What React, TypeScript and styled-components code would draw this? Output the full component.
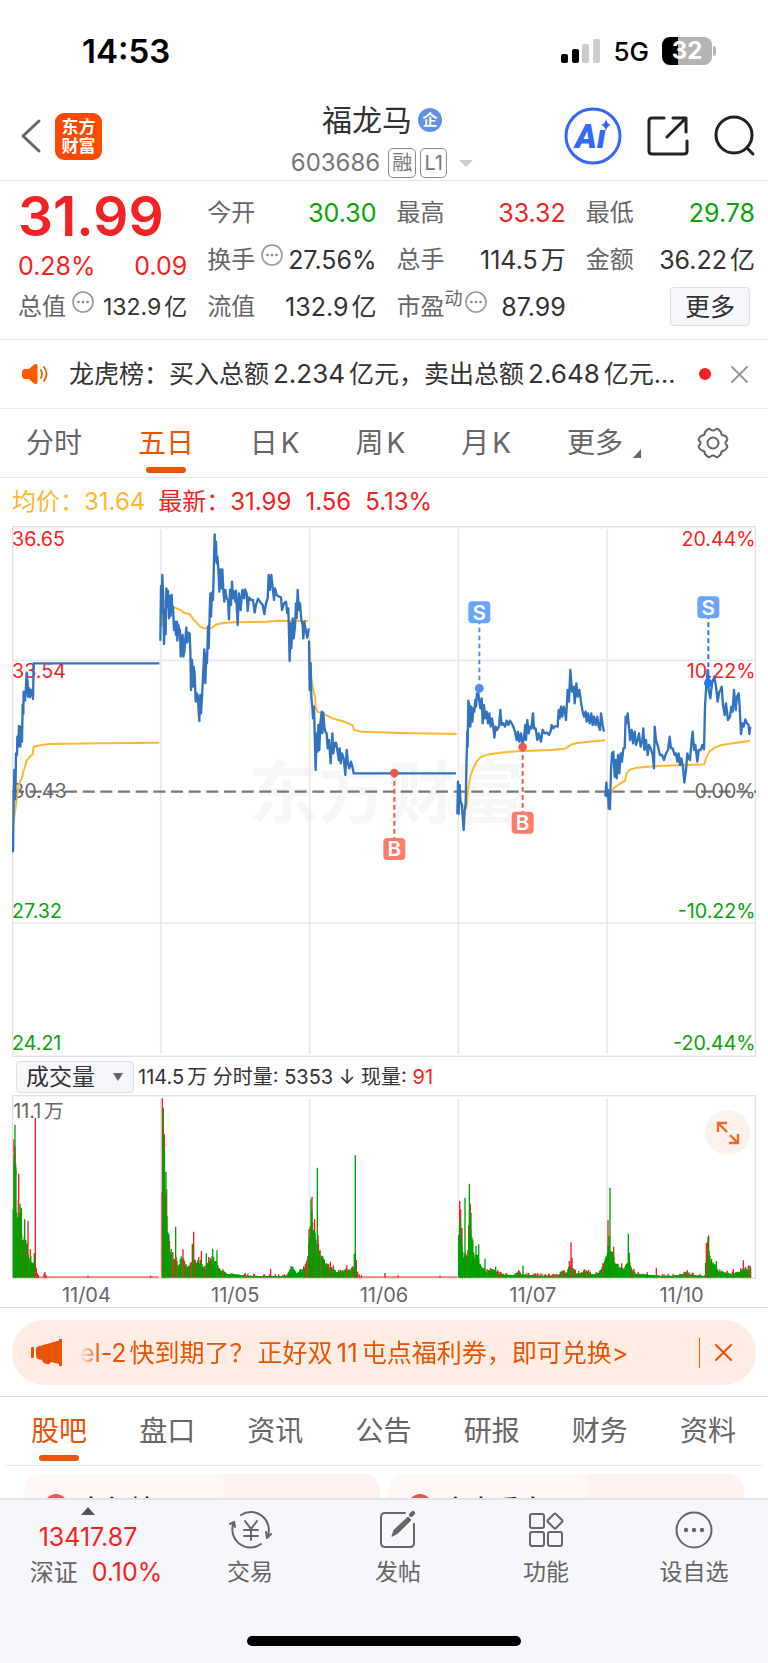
import React from 'react';
import styled, { createGlobalStyle, css } from 'styled-components';

const color = {
  red: '#f52222',
  green: '#0aa30a',
  orange: '#ea5504',
  text: '#333333',
  sub: '#666666',
  line: '#ececee',
  grid: '#e6e9f0',
  blue: '#3273c0',
  avg: '#ffb833',
  panel: '#f6f7fa',
};

const GlobalStyle = createGlobalStyle`
  *, *::before, *::after { box-sizing: border-box; }
  body {
    margin: 0;
    background: #fff;
    color: ${color.text};
    font-family: Inter, "Noto Sans CJK SC", sans-serif;
  }
  button, select { font: inherit; color: inherit; }
  button { padding: 0; border: 0; background: none; cursor: pointer; }
  a { color: inherit; text-decoration: none; }
  svg { display: block; }
`;

const Page = styled.div`
  display: flex;
  flex-direction: column;
  min-height: 100vh;
`;

/* ---------- status bar ---------- */

const StatusBar = styled.div`
  display: flex;
  align-items: center;
  justify-content: space-between;
  height: 102px;
  padding: 0 56px 0 82px;
  color: #000;
`;

const Clock = styled.time`
  font-size: 33px;
  font-weight: 600;
`;

const StatusIcons = styled.div`
  display: flex;
  align-items: center;
  gap: 13px;
  font-size: 26px;
  font-weight: 500;
`;

const Battery = styled.span`
  position: relative;
  width: 50px;
  height: 28px;
  border-radius: 8px;
  background: linear-gradient(to right, #000 32%, #b4b4b4 32%);
  color: #fff;
  font-size: 24px;
  font-weight: 700;
  line-height: 28px;
  text-align: center;

  &::after {
    content: '';
    position: absolute;
    left: 51px;
    top: 9px;
    width: 3px;
    height: 10px;
    border-radius: 0 3px 3px 0;
    background: #b4b4b4;
  }
`;

/* ---------- header ---------- */

const Header = styled.header`
  display: grid;
  grid-template-columns: 1fr auto 1fr;
  height: 79px;
  padding: 0 12px 0 8px;
  border-bottom: 1px solid #e4e4e6;
`;

const HeaderSide = styled.div<{ $end?: boolean }>`
  display: flex;
  align-items: center;
  gap: ${(p) => (p.$end ? 25 : 13)}px;
  justify-content: ${(p) => (p.$end ? 'flex-end' : 'flex-start')};
  height: 68px;
  padding-left: 12px;
`;

const Logo = styled.a`
  width: 47px;
  height: 47px;
  padding-top: 5px;
  border-radius: 9px;
  background: #ff4800;
  color: #fff;
  font-size: 17px;
  font-weight: 700;
  line-height: 19px;
  text-align: center;
`;

const Title = styled.div`
  display: flex;
  flex-direction: column;
  align-items: center;
  gap: 10px;
`;

const TitleLine = styled.h1`
  display: flex;
  align-items: center;
  gap: 6px;
  margin: 0;
  font-size: 30px;
  font-weight: 400;
  line-height: 36px;
`;

const CorpBadge = styled.span`
  width: 24px;
  height: 24px;
  border-radius: 50%;
  background: #6190e8;
  color: #fff;
  font-size: 15px;
  font-weight: 700;
  line-height: 23px;
  text-align: center;
`;

const CodeLine = styled.div`
  display: flex;
  align-items: center;
  gap: 4px;
  color: #777;
  font-size: 24px;
  line-height: 30px;
`;

const Tag = styled.span`
  min-width: 27px;
  height: 30px;
  padding: 0 3px;
  border: 1px solid #8a8a8a;
  border-radius: 5px;
  font-size: 20px;
  line-height: 28px;
  text-align: center;

  &:first-of-type { margin-left: 4px; }
`;

const Caret = styled.span`
  width: 0;
  margin-left: 8px;
  border: 7px solid transparent;
  border-top-color: #ccc;
  border-bottom: 0;
`;

/* ---------- quote ---------- */

const Quote = styled.section`
  display: grid;
  grid-template-columns: repeat(4, 1fr);
  column-gap: 20px;
  padding: 8px 13px 9px 18px;
  border-bottom: 1px solid ${color.line};
`;

const QuoteColumn = styled.dl`
  margin: 0;
`;

const Price = styled.div`
  height: 54px;
  color: ${color.red};
  font-size: 55px;
  font-weight: 600;
  line-height: 54px;
`;

const Change = styled.div`
  display: flex;
  justify-content: space-between;
  height: 40px;
  padding-top: 6px;
  color: ${color.red};
  font-size: 25px;
  line-height: 34px;
`;

type Tone = 'red' | 'green' | 'text';

const Cell = styled.div<{ $tone?: Tone; $small?: boolean }>`
  display: flex;
  align-items: center;
  justify-content: space-between;
  height: 47px;
  white-space: nowrap;

  dt {
    display: flex;
    align-items: center;
    color: ${color.sub};
    font-size: 24px;
    line-height: 32px;
  }
  dt svg { margin: 0 0 10px 6px; }
  dt sup { margin-bottom: 16px; font-size: 18px; line-height: 18px; }
  dt sup + svg { margin-left: 2px; }
  dd {
    margin: 0;
    color: ${(p) => color[p.$tone ?? 'text']};
    font-size: ${(p) => (p.$small ? 23 : 25)}px;
    line-height: 32px;
  }
`;

const Unit = styled.span`
  margin-left: 3px;
`;

const MoreCell = styled(Cell)`
  justify-content: flex-end;
  padding-right: 5px;
`;

const MoreButton = styled.button`
  width: 80px;
  height: 39px;
  border: 1px solid #dcdee3;
  border-radius: 4px;
  background: ${color.panel};
  font-size: 25px;
  line-height: 36px;
`;

/* ---------- news ---------- */

const News = styled.section`
  display: flex;
  align-items: center;
  height: 69px;
  padding: 0 20px 0 22px;
  border-bottom: 1px solid ${color.line};
`;

const NewsLink = styled.a`
  flex: 1;
  min-width: 0;
  margin: 0 16px 0 20px;
  overflow: hidden;
  font-size: 25px;
  line-height: 36px;
  text-overflow: ellipsis;
  white-space: nowrap;
`;

const Num = styled.span`
  margin: 0 4px;
  font-size: 26px;
`;

const UnreadDot = styled.span`
  width: 12px;
  height: 12px;
  margin-right: 20px;
  border-radius: 50%;
  background: ${color.red};
`;

const DismissButton = styled.button<{ $muted?: boolean }>`
  color: ${(p) => (p.$muted ? '#999' : color.orange)};
`;

/* ---------- tabs ---------- */

const Tabs = styled.nav<{ $kind: 'period' | 'section' }>`
  display: flex;
  align-items: center;
  justify-content: space-between;
  height: 69px;
  ${(p) =>
    p.$kind === 'period'
      ? css`
          padding: 0 39px 0 26px;
        `
      : css`
          margin: 0 6px;
          padding: 0 26px 0 25px;
        `}
  border-bottom: 1px solid #e8e8ea;
`;

const Tab = styled.button<{ $active?: boolean }>`
  position: relative;
  display: flex;
  align-items: center;
  gap: 3px;
  height: 68px;
  color: ${(p) => (p.$active ? color.orange : color.sub)};
  font-size: 28px;
  line-height: 68px;

  ${(p) =>
    p.$active &&
    css`
      &::after {
        content: '';
        position: absolute;
        left: 8px;
        right: 8px;
        bottom: 4px;
        height: 6px;
        border-radius: 3px;
        background: ${color.orange};
      }
    `}
`;

const Corner = styled.span`
  align-self: flex-end;
  margin: 0 0 19px 7px;
  border-left: 8px solid transparent;
  border-bottom: 9px solid #666;
`;

/* ---------- charts ---------- */

const Legend = styled.p`
  display: flex;
  align-items: center;
  height: 48px;
  margin: 0;
  padding: 0 12px;
  color: ${color.red};
  font-size: 24px;
  line-height: 32px;
  white-space: pre;
`;

const Avg = styled.span`
  margin-right: 13px;
  color: ${color.avg};
`;

const LegendValue = styled.span`
  margin-right: 14px;
`;

const Charts = styled.section`
  padding: 0 12px;
  border-bottom: 1px solid #dfe0e4;

  > svg { width: 100%; height: auto; }
`;

const VolumeBar = styled.div`
  display: flex;
  align-items: center;
  gap: 4px;
  height: 38px;
  padding: 2px 0 0 4px;
  font-size: 20px;
  line-height: 28px;
  white-space: pre;
`;

const SelectBox = styled.label`
  position: relative;

  select {
    width: 118px;
    height: 32px;
    padding: 0 0 0 9px;
    border: 1px solid #dcdee3;
    border-radius: 4px;
    background: ${color.panel};
    appearance: none;
    font-size: 23px;
    line-height: 28px;
  }
  &::after {
    content: '';
    position: absolute;
    right: 11px;
    top: 12px;
    border: 5px solid transparent;
    border-top: 8px solid #666;
    border-bottom: 0;
    pointer-events: none;
  }
`;

const Current = styled.span`
  color: ${color.red};
`;

const VolumeWrap = styled.div`
  position: relative;

  > svg { width: 100%; height: auto; }
`;

const ExpandButton = styled.button`
  position: absolute;
  top: 15px;
  right: 6px;
  display: grid;
  place-items: center;
  width: 45px;
  height: 45px;
  border-radius: 50%;
  background: #fdf1eb;
`;

const Dates = styled.div`
  display: grid;
  grid-template-columns: repeat(5, 1fr);
  height: 28px;
  color: ${color.sub};
  font-size: 20px;
  line-height: 32px;
  text-align: center;
`;

/* ---------- promo banner ---------- */

const PromoSection = styled.section`
  padding: 12px 12px 11px;
  border-bottom: 1px solid #dfe0e4;
`;

const Promo = styled.div`
  display: flex;
  align-items: center;
  height: 65px;
  padding: 0 24px 0 19px;
  border-radius: 32px;
  background: #ffede4;
  color: ${color.orange};
`;

const PromoText = styled.a`
  flex: 1;
  min-width: 0;
  margin-left: 17px;
  overflow: hidden;
  font-size: 25px;
  line-height: 36px;
  white-space: nowrap;
  mask-image: linear-gradient(to right, transparent, #000 20px);
`;

const Divider = styled.span`
  width: 1px;
  height: 30px;
  margin-right: 15px;
  background: ${color.orange};
`;

/* ---------- cards ---------- */

const Cards = styled.section`
  display: grid;
  grid-template-columns: 1fr 1fr;
  flex: 1 0 32px;
  gap: 8px;
  height: 32px;
  padding: 8px 24px 0;
  overflow: hidden;
`;

const Card = styled.article`
  display: flex;
  gap: 10px;
  height: 64px;
  padding: 20px 20px 0;
  border-radius: 16px;
  background: linear-gradient(to right, #fff7f5 56%, #fff1ef 56%);
  color: #222;
  font-size: 26px;
  font-weight: 500;
  line-height: 32px;

  &::before {
    content: '';
    width: 24px;
    height: 24px;
    border-radius: 50%;
    background: #e05a54;
  }
`;

/* ---------- bottom bar ---------- */

const Bottom = styled.footer`
  position: sticky;
  bottom: 0;
  border-top: 2px solid #e3e3e5;
  background: ${color.panel};
`;

const BottomRow = styled.nav`
  display: grid;
  grid-template-columns: 176px repeat(4, 1fr);
  height: 136px;
`;

const IndexLink = styled.a`
  display: flex;
  flex-direction: column;
  align-items: center;
  padding-top: 7px;
  color: ${color.red};
  font-size: 25px;
  line-height: 35px;
`;

const CaretUp = styled.span`
  border: 7px solid transparent;
  border-top: 0;
  border-bottom: 8px solid #555;
  margin-bottom: 5px;
`;

const IndexLine = styled.span`
  display: flex;
  gap: 14px;
  margin-left: 16px;
  white-space: nowrap;
`;

const IndexName = styled.span`
  color: ${color.sub};
  font-size: 24px;
`;

const Action = styled.button`
  display: flex;
  flex-direction: column;
  align-items: center;
  padding-top: 11px;
  color: ${color.sub};
  font-size: 23px;
  line-height: 32px;

  svg { margin-bottom: 7px; }
`;

const HomeIndicator = styled.div`
  width: 274px;
  height: 10px;
  margin: 0 auto 17px;
  border-radius: 5px;
  background: #000;
`;

/* ---------- icons ---------- */

const stroke = (width: number) => ({
  fill: 'none',
  stroke: 'currentColor',
  strokeWidth: width,
  strokeLinecap: 'round' as const,
  strokeLinejoin: 'round' as const,
});

const SignalIcon = () => (
  <svg width="39" height="25" viewBox="0 0 39 25">
    <rect x="0" y="15" width="7" height="9" rx="2" />
    <rect x="11" y="10" width="7" height="14" rx="2" />
    <rect x="21" y="5" width="7" height="19" rx="2" fill="#ccc" />
    <rect x="32" y="0" width="7" height="24" rx="2" fill="#ccc" />
  </svg>
);

const BackIcon = () => (
  <svg width="22" height="36" viewBox="0 0 22 36" {...stroke(3)} color="#666">
    <path d="M19 3 3 18l16 15" />
  </svg>
);

const AiIcon = () => (
  <svg width="58" height="58" viewBox="0 0 58 58">
    <circle cx="29" cy="29" r="27" fill="none" stroke="#3566ff" strokeWidth="3" />
    <text x="11" y="41" fontFamily="Roboto, Inter, sans-serif" fontSize="33" fontWeight="900" fontStyle="italic" fill="#3566ff">
      Aı
    </text>
    <path d="M42 12q1 5 5 6-4 1-5 6-1-5-5-6 4-1 5-6Z" fill="#3566ff" />
  </svg>
);

const ShareIcon = () => (
  <svg width="42" height="42" viewBox="0 0 42 42" {...stroke(3)} color="#222">
    <path d="M17 3H5Q2 3 2 6v30q0 3 3 3h32q3 0 3-3V26M26 3h13v14M39 3 20 22" />
  </svg>
);

const SearchIcon = () => (
  <svg width="42" height="42" viewBox="0 0 42 42" {...stroke(3)} color="#222">
    <circle cx="20" cy="20" r="18" />
    <path d="m33 33 6 6" />
  </svg>
);

const DotsIcon = () => (
  <svg width="22" height="22" viewBox="0 0 22 22">
    <circle cx="11" cy="11" r="10" fill="none" stroke="#999" strokeWidth="1.6" />
    <g fill="#888">
      <circle cx="6.5" cy="11" r="1.3" />
      <circle cx="11" cy="11" r="1.3" />
      <circle cx="15.5" cy="11" r="1.3" />
    </g>
  </svg>
);

const SpeakerIcon = () => (
  <svg width="27" height="22" viewBox="0 0 27 22">
    <path d="M0 9Q0 6 3 6H7L12 1.5Q15.500 0 15.500 3V19Q15.500 22 12 20.500L7 16H3Q0 16 0 13Z" fill="#ff5a00" />
    <path d="M19 7q2 4 0 8M22 4q5 7 0 14" fill="none" stroke="#ff5a00" strokeWidth="1.8" strokeLinecap="round" />
  </svg>
);

const CloseIcon = () => (
  <svg width="17" height="17" viewBox="0 0 17 17" {...stroke(2)}>
    <path d="m1 1 15 15M16 1 1 16" />
  </svg>
);

const GearIcon = () => (
  <svg width="32" height="32" viewBox="0 0 32 32" {...stroke(2)} color="#666">
    <path d="M10.500 2.500Q12 1 13.500 2.500 16 4.500 18.500 2.500 20 1 21.500 2.500L24 5Q24 8.500 27 8.500 29.500 9 30 11.500 31 13 29 14.500 28 16 29 17.500 31 19 30 20.500 29 23 27 23.500 24 23.500 24 27L21.500 29.500Q20 31 18.500 29.500 16 27.500 13.500 29.500 12 31 10.500 29.500L8 27Q8 23.500 5 23.500 3 23 2 20.500 1 19 3 17.500 4 16 3 14.500 1 13 2 11.500 3 9 5 8.500 8 8.500 8 5Z" />
    <circle cx="16" cy="16" r="5.5" />
  </svg>
);

const ExpandIcon = () => (
  <svg width="24" height="24" viewBox="0 0 24 24" fill="none" stroke="#f26a1b" strokeWidth="2.4">
    <path d="M2 11V2h9M2 2l9 9M14 14l8 8M22 13v9h-9" />
  </svg>
);

const MegaphoneIcon = () => (
  <svg width="32" height="28" viewBox="0 0 32 28" fill="currentColor">
    <rect x="0" y="8" width="3" height="11" rx="1" />
    <path d="M5 10Q5 8 7 7.500L28 1.500V0h3v27h-3v-2L20 23q-1 3-4 2l-3-1q-2-1-2-3L7 20Q5 19 5 17Z" />
  </svg>
);

const TradeIcon = () => (
  <svg width="44" height="38" viewBox="0 0 44 38" {...stroke(2)}>
    <path d="M13 4A18 18 0 0 1 39 27M39 27l4-4M39 27l-1-6" />
    <path d="M33 33A18 18 0 0 1 6 11M6 11l-4 2M6 11l1 5" />
    <path d="m17 10 6 8 6-8M23 18v11M16 19h14M16 25h14" />
  </svg>
);

const PostIcon = () => (
  <svg width="38" height="38" viewBox="0 0 38 38" {...stroke(2)}>
    <path d="M26 2H6Q2 2 2 6v26q0 4 4 4h25q4 0 4-4V13" />
    <path d="m13 25 2-6L29 6l3 3-13 13Z" fill="currentColor" strokeWidth="1" />
    <path d="m32 4 2-2" strokeWidth="4" />
  </svg>
);

const FeatureIcon = () => (
  <svg width="38" height="38" viewBox="0 0 38 38" {...stroke(2)}>
    <rect x="3" y="3" width="14" height="14" rx="2" />
    <rect x="3" y="21" width="14" height="14" rx="2" />
    <rect x="21" y="21" width="14" height="14" rx="2" />
    <path d="M27 3q1-1 2 0l6 6q1 1 0 2l-6 6q-1 1-2 0l-6-6q-1-1 0-2Z" />
  </svg>
);

const MoreIcon = () => (
  <svg width="38" height="38" viewBox="0 0 38 38" {...stroke(2)}>
    <circle cx="19" cy="19" r="17.500" />
    <g fill="currentColor" stroke="none">
      <circle cx="11" cy="19" r="2.200" />
      <circle cx="19" cy="19" r="2.200" />
      <circle cx="27" cy="19" r="2.200" />
    </g>
  </svg>
);

/* ---------- chart data ---------- */

interface Session {
  x: number;
  y: number;
  price: string;
  average: string;
}

const sessions: Session[] = [
  {
    x: -36,
    y: -48,
    price:
      '39,1027 41,880 43,780 46,868 48,730 51,735 52,680 55,710 57,648 60,650 61,710 63,655 66,695 68,583 70,612 71,545 75,572 78,530 80,488 83,520 84,560 88,535 90,562 94,540 97,545 99,567 101,460 478,460',
    average:
      '39,850 41,930 46,900 50,870 56,825 62,812 67,800 70,785 74,773 80,752 88,742 98,733 101,710 125,705 150,702 300,700 478,698',
  },
  {
    x: -36,
    y: -48,
    price:
      '481,392 483,228 485,310 487,195 490,270 492,402 495,300 497,373 499,235 502,290 504,243 507,325 510,258 512,318 515,255 517,300 519,290 522,360 525,335 528,375 531,335 532,392 535,345 538,358 540,360 542,440 545,400 548,375 550,440 553,425 556,385 559,353 562,398 566,368 569,372 571,420 573,540 576,450 579,530 581,470 584,492 587,575 590,550 593,555 596,605 598,633 601,555 603,610 607,545 610,480 613,418 616,520 619,430 621,460 624,350 626,415 629,310 631,250 633,320 636,248 639,270 642,150 644,73 646,150 648,95 650,160 652,140 655,175 658,245 661,178 664,235 667,178 670,240 673,275 676,240 680,265 684,270 687,328 690,240 693,285 696,215 699,265 703,245 706,275 708,242 713,345 717,250 722,300 727,240 732,265 735,238 740,250 743,303 747,262 753,270 759,270 764,308 768,285 774,266 780,275 788,285 793,312 798,280 803,265 806,195 810,240 814,195 818,232 822,270 825,235 830,255 838,260 843,262 846,300 852,280 858,275 862,310 865,295 869,453 871,340 874,415 878,325 881,385 885,350 888,280 890,325 893,240 897,300 900,280 904,330 908,345 910,385 913,335 917,360 922,383 926,355',
    average:
      '486,350 488,270 500,285 515,290 530,295 545,302 552,308 570,313 580,328 590,338 600,350 612,355 635,354 648,344 668,339 700,337 800,335 835,332 924,333',
  },
  {
    x: 864,
    y: 222,
    price:
      '27,122 29,270 32,190 34,290 37,320 39,355 42,320 44,400 47,510 50,400 53,455 55,375 58,450 61,370 65,335 67,400 70,338 73,380 76,395 80,400 83,445 87,420 92,490 97,400 100,460 104,430 108,428 112,450 116,480 119,445 122,490 126,460 131,475 136,525 140,450 144,490 148,505 153,485 157,500 161,520 468,520',
    average:
      '27,120 29,150 33,230 38,262 45,290 47,320 52,335 65,340 80,346 95,354 110,359 130,364 158,376 162,390 185,395 300,399 470,402',
  },
  {
    x: 1314,
    y: -48,
    price:
      '22,912 24,815 26,912 29,825 32,880 35,880 38,920 41,960 44,900 47,880 49,780 52,665 53,710 55,572 59,590 61,650 64,590 67,635 70,595 73,605 76,570 78,590 81,550 85,550 88,575 91,595 95,565 98,640 102,585 106,625 110,605 114,640 118,610 122,650 126,625 130,650 133,683 137,650 141,660 147,650 151,600 155,645 160,640 165,650 170,632 175,645 180,632 185,640 190,650 195,665 200,690 204,665 208,695 213,670 217,700 221,690 226,645 228,690 232,630 236,670 240,650 244,655 249,610 252,655 257,655 262,690 266,670 273,695 278,660 284,670 291,668 297,675 303,660 305,645 310,655 316,648 323,650 326,600 329,625 333,590 337,620 341,590 345,605 348,630 353,540 357,575 361,480 366,545 371,530 374,580 379,520 383,560 388,540 393,575 397,600 402,620 407,605 410,635 414,610 419,640 424,610 428,645 432,620 437,645 442,620 446,650 450,660 453,610 458,645 461,662 464,660',
    average:
      '40,885 46,895 49,895 52,870 55,830 62,795 70,775 80,755 90,743 110,734 150,728 200,724 240,722 300,720 345,716 355,710 362,704 385,698 465,691',
  },
  {
    x: 1314,
    y: -48,
    price:
      '466,860 469,818 472,860 474,840 476,895 480,897 483,780 486,730 490,725 494,800 497,750 500,805 504,735 508,790 512,730 516,755 520,715 524,715 527,620 530,640 533,610 536,640 540,690 545,660 549,700 554,665 558,705 563,690 567,670 572,710 577,690 580,655 583,720 588,690 593,735 597,705 602,715 608,735 612,775 614,650 618,690 624,710 630,735 636,735 642,750 648,730 654,720 659,680 663,715 668,715 674,735 678,730 682,755 686,730 690,765 694,745 699,770 703,818 708,780 712,730 716,745 720,750 725,690 728,665 732,720 736,705 742,755 746,720 752,720 757,705 762,718 765,590 768,540 773,480 776,540 781,565 786,520 793,500 798,530 803,575 808,545 812,540 815,530 819,585 824,615 828,580 834,630 840,620 844,590 848,605 852,540 857,600 861,560 866,550 869,590 873,672 877,640 881,650 886,628 891,640 896,645 898,672 901,650',
    average:
      '475,860 483,850 490,835 500,828 512,820 525,812 530,790 540,779 560,773 620,768 680,766 763,763 768,745 778,725 795,712 815,705 850,700 900,692',
  },
];

interface VolumeSession {
  x: number;
  envelope: [number, number][];
  spikes: [number, number, 'r' | 'g'][];
}

const volumes: VolumeSession[] = [
  {
    x: -36,
    envelope: [[40, 210], [43, 400], [47, 330], [50, 220], [55, 215], [60, 220], [65, 150], [68, 100], [74, 130], [80, 110], [85, 70], [95, 55], [103, 40]],
    spikes: [[42, 415, 'r'], [45, 458, 'g'], [47, 343, 'r'], [56, 312, 'r'], [60, 222, 'g'], [64, 210, 'g'], [74, 175, 'g'], [84, 170, 'r'], [91, 85, 'r'], [103, 74, 'g'], [106, 480, 'r'], [109, 30, 'r'], [112, 14, 'r'], [115, 8, 'r'], [132, 12, 'r'], [135, 17, 'r'], [138, 8, 'r'], [264, 6, 'r'], [452, 6, 'r']],
  },
  {
    x: -36,
    envelope: [[486, 250], [488, 510], [491, 430], [495, 300], [499, 200], [503, 130], [510, 90], [520, 60], [526, 60], [535, 40], [545, 60], [555, 45], [565, 30], [575, 55], [585, 45], [600, 55], [612, 25], [620, 40], [637, 70], [650, 45], [660, 25], [680, 12], [720, 8], [780, 5], [860, 5], [875, 35], [890, 15], [905, 25], [920, 40], [926, 100]],
    spikes: [[487, 538, 'r'], [490, 510, 'g'], [493, 432, 'r'], [498, 318, 'g'], [500, 265, 'r'], [506, 131, 'g'], [527, 153, 'g'], [549, 85, 'r'], [577, 102, 'g'], [581, 138, 'r'], [604, 80, 'r'], [619, 73, 'g'], [638, 87, 'g'], [651, 82, 'g'], [812, 26, 'r']],
  },
  {
    x: -36,
    envelope: [[928, 130], [933, 230], [938, 180], [943, 140], [950, 115], [955, 90], [962, 65], [975, 50], [990, 30], [1000, 30], [1010, 15], [1025, 20], [1040, 30], [1050, 20], [1060, 35], [1066, 45], [1070, 25]],
    spikes: [[927, 145, 'r'], [933, 235, 'g'], [936, 243, 'r'], [944, 176, 'r'], [952, 330, 'g'], [954, 127, 'r'], [991, 48, 'r'], [1063, 72, 'g'], [1066, 367, 'g'], [1069, 53, 'r'], [1073, 18, 'r'], [1078, 10, 'r'], [1084, 7, 'r'], [1155, 14, 'r'], [1194, 7, 'r'], [1320, 6, 'r']],
  },
  {
    x: 1104,
    envelope: [[236, 150], [240, 200], [245, 130], [250, 70], [258, 60], [264, 80], [268, 200], [273, 170], [278, 110], [284, 60], [290, 80], [298, 45], [305, 30], [320, 20], [345, 25], [360, 12], [400, 8], [415, 18], [425, 10], [450, 8], [530, 6], [545, 18], [560, 15], [570, 40], [580, 25], [590, 12], [620, 20], [640, 10], [655, 15], [665, 30], [675, 50], [681, 70]],
    spikes: [[239, 230, 'r'], [242, 205, 'r'], [246, 150, 'r'], [255, 240, 'g'], [266, 157, 'r'], [268, 282, 'g'], [271, 222, 'r'], [273, 195, 'g'], [288, 95, 'g'], [296, 100, 'g'], [315, 57, 'g'], [331, 29, 'r'], [347, 33, 'g'], [429, 36, 'g'], [573, 106, 'r'], [568, 50, 'r'], [576, 60, 'r']],
  },
  {
    x: 1104,
    envelope: [[682, 80], [686, 125], [690, 90], [697, 75], [705, 50], [715, 35], [730, 25], [740, 40], [748, 60], [755, 25], [770, 12], [800, 10], [850, 6], [900, 8], [920, 18], [930, 10], [975, 5], [979, 90], [985, 115], [990, 60], [1000, 40], [1008, 40], [1015, 20], [1060, 12], [1090, 25], [1110, 30], [1114, 25]],
    spikes: [[684, 172, 'r'], [690, 270, 'g'], [701, 93, 'r'], [725, 43, 'r'], [745, 132, 'g'], [748, 75, 'g'], [829, 30, 'r'], [979, 103, 'r'], [986, 127, 'r'], [984, 122, 'g'], [1009, 50, 'g'], [1060, 26, 'r'], [1090, 52, 'r'], [1111, 35, 'g']],
  },
];

const noise = (n: number) => {
  const v = Math.sin(n * 12.9898) * 43758.5453;
  return v - Math.floor(v);
};

const heightAt = (envelope: [number, number][], x: number) => {
  const i = envelope.findIndex(([ex]) => ex >= x);
  if (i <= 0) return envelope[0][1];
  const [x0, h0] = envelope[i - 1];
  const [x1, h1] = envelope[i];
  return h0 + ((h1 - h0) * (x - x0)) / (x1 - x0);
};

const BASE = 548;

const barsPath = ({ envelope, spikes }: VolumeSession, tone: 'r' | 'g') => {
  let d = '';
  const end = envelope[envelope.length - 1][0];
  for (let x = envelope[0][0]; x <= end; x += 2.5) {
    const isRed = noise(x) > 0.78;
    const h = heightAt(envelope, x) * (0.82 + noise(x + 7) * 0.3) + (isRed ? 5 : 0);
    if (isRed === (tone === 'r')) d += `M${x} ${BASE}v${-Math.round(h)}`;
  }
  spikes.filter((s) => s[2] === tone).forEach(([x, h]) => {
    d += `M${x} ${BASE}v${-h}`;
  });
  return d;
};

const columns = [446, 893, 1339, 1786];

const priceLabels: { left: string; right: string; y: number; fill: string }[] = [
  { left: '36.65', right: '20.44%', y: 60, fill: color.red },
  { left: '33.54', right: '10.22%', y: 457, fill: color.red },
  { left: '30.43', right: '0.00%', y: 817, fill: color.sub },
  { left: '27.32', right: '-10.22%', y: 1176, fill: color.green },
  { left: '24.21', right: '-20.44%', y: 1573, fill: color.green },
];

const markers = [
  { kind: 'B', x: 1147, dot: 741, badge: 969, fill: '#ff7b6b', dotFill: '#f0584c' },
  { kind: 'S', x: 1402, dot: 487, badge: 259, fill: '#67a5ff', dotFill: '#4a90f5' },
  { kind: 'B', x: 1532, dot: 663, badge: 890, fill: '#ff7b6b', dotFill: '#f0584c' },
  { kind: 'S', x: 2089, dot: 471, badge: 244, fill: '#67a5ff', dotFill: '#2079f0' },
];

const PriceChart = () => (
  <svg viewBox="0 0 2232 1593" role="img" aria-label="五日价格走势">
    <text x="1124" y="876" fontSize="206" fontWeight="700" fill="#f6f6f6" textAnchor="middle">
      东方财富
    </text>
    <g stroke={color.grid} strokeWidth="5" fill="none">
      {columns.map((x) => (
        <path key={x} d={`M${x} 9V1584`} />
      ))}
      <path d="M0 403H2232M0 1191H2232" />
      <rect x="2" y="2" width="2228" height="1589" stroke="#dfe1e6" strokeWidth="4" />
    </g>
    <path d="M0 797H2232" stroke="#777" strokeWidth="7" strokeDasharray="36 17" />
    <g fontSize="59">
      {priceLabels.map((l) => (
        <g key={l.left} fill={l.fill}>
          <text x="0" y={l.y}>{l.left}</text>
          <text x="2231" y={l.y} textAnchor="end">{l.right}</text>
        </g>
      ))}
    </g>
    {sessions.map((s, i) => (
      <g key={i} transform={`translate(${s.x} ${s.y})`} fill="none" strokeLinejoin="round">
        <polyline points={s.average} stroke={color.avg} strokeWidth="6" />
        <polyline points={s.price} stroke={color.blue} strokeWidth="7" />
      </g>
    ))}
    {markers.map((m) => (
      <g key={m.x}>
        <path d={`M${m.x} ${m.dot}V${m.badge}`} stroke={m.dotFill} strokeWidth="6" strokeDasharray="14 10" />
        <circle cx={m.x} cy={m.dot} r="13" fill={m.dotFill} />
        <rect x={m.x - 33} y={m.badge - 33} width="66" height="66" rx="12" fill={m.fill} />
        <text x={m.x} y={m.badge + 22} fontSize="62" fontWeight="600" fill="#fff" textAnchor="middle">
          {m.kind}
        </text>
      </g>
    ))}
  </svg>
);

const VolumeChart = () => (
  <svg viewBox="0 0 2232 552" role="img" aria-label="五日成交量">
    <g stroke={color.grid} strokeWidth="5" fill="none">
      {columns.map((x) => (
        <path key={x} d={`M${x} 10V548`} />
      ))}
      <rect x="2" y="2" width="2228" height="548" stroke="#dfe1e6" strokeWidth="4" />
    </g>
    <text x="4" y="69" fontSize="59" fill={color.sub}>
      11.1<tspan dx="8">万</tspan>
    </text>
    <path d="M66 546H440M1030 546H1336" stroke="#f52222" strokeWidth="3" />
    {volumes.map((v, i) => (
      <g key={i} transform={`translate(${v.x} 0)`} strokeWidth="4" fill="none">
        <path d={barsPath(v, 'r')} stroke="#f52222" />
        <path d={barsPath(v, 'g')} stroke="#00a000" />
      </g>
    ))}
  </svg>
);

/* ---------- page ---------- */

interface Stat {
  label: string;
  value: string;
  unit?: string;
  tone?: Tone;
  sup?: string;
  info?: boolean;
}

const stats: Stat[][] = [
  [
    { label: '今开', value: '30.30', tone: 'green' },
    { label: '换手', value: '27.56%', info: true },
    { label: '流值', value: '132.9', unit: '亿' },
  ],
  [
    { label: '最高', value: '33.32', tone: 'red' },
    { label: '总手', value: '114.5', unit: '万' },
    { label: '市盈', value: '87.99', sup: '动', info: true },
  ],
  [
    { label: '最低', value: '29.78', tone: 'green' },
    { label: '金额', value: '36.22', unit: '亿' },
  ],
];

const StatCell = ({ stat, small }: { stat: Stat; small?: boolean }) => (
  <Cell $tone={stat.tone} $small={small}>
    <dt>
      {stat.label}
      {stat.sup && <sup>{stat.sup}</sup>}
      {stat.info && <DotsIcon />}
    </dt>
    <dd>
      {stat.value}
      {stat.unit && <Unit>{stat.unit}</Unit>}
    </dd>
  </Cell>
);

const candlePeriods = ['日', '周', '月'];
const sectionTabs = ['股吧', '盘口', '资讯', '公告', '研报', '财务', '资料'];
const actions = [
  { label: '交易', icon: <TradeIcon /> },
  { label: '发帖', icon: <PostIcon /> },
  { label: '功能', icon: <FeatureIcon /> },
  { label: '设自选', icon: <MoreIcon /> },
];

export default function App() {
  return (
    <Page>
      <GlobalStyle />
      <StatusBar>
        <Clock>14:53</Clock>
        <StatusIcons>
          <SignalIcon />
          <span>5G</span>
          <Battery>32</Battery>
        </StatusIcons>
      </StatusBar>

      <Header>
        <HeaderSide>
          <button aria-label="返回"><BackIcon /></button>
          <Logo href="#home">东方<br />财富</Logo>
        </HeaderSide>
        <Title>
          <TitleLine>
            福龙马<CorpBadge>企</CorpBadge>
          </TitleLine>
          <CodeLine>
            603686
            <Tag>融</Tag>
            <Tag>L1</Tag>
            <Caret />
          </CodeLine>
        </Title>
        <HeaderSide $end>
          <button aria-label="智能助手"><AiIcon /></button>
          <button aria-label="分享"><ShareIcon /></button>
          <button aria-label="搜索"><SearchIcon /></button>
        </HeaderSide>
      </Header>

      <Quote>
        <div>
          <Price>31.99</Price>
          <Change>
            <span>0.28%</span>
            <span>0.09</span>
          </Change>
          <QuoteColumn>
            <StatCell stat={{ label: '总值', value: '132.9', unit: '亿', info: true }} small />
          </QuoteColumn>
        </div>
        {stats.map((column, i) => (
          <div key={i}>
            <QuoteColumn>
              {column.map((s) => (
                <StatCell key={s.label} stat={s} />
              ))}
            </QuoteColumn>
            {column.length < 3 && (
              <MoreCell>
                <MoreButton>更多</MoreButton>
              </MoreCell>
            )}
          </div>
        ))}
      </Quote>

      <News>
        <SpeakerIcon />
        <NewsLink href="#news">
          龙虎榜：买入总额<Num>2.234</Num>亿元，卖出总额<Num>2.648</Num>亿元...
        </NewsLink>
        <UnreadDot />
        <DismissButton $muted aria-label="关闭"><CloseIcon /></DismissButton>
      </News>

      <Tabs $kind="period">
        <Tab>分时</Tab>
        <Tab $active>五日</Tab>
        {candlePeriods.map((p) => (
          <Tab key={p}>
            {p}
            <span>K</span>
          </Tab>
        ))}
        <Tab>更多<Corner /></Tab>
        <button aria-label="设置"><GearIcon /></button>
      </Tabs>

      <Legend>
        <Avg>均价：31.64</Avg>
        最新：<LegendValue>31.99</LegendValue>
        <LegendValue>1.56</LegendValue>
        <span>5.13%</span>
      </Legend>

      <Charts>
        <PriceChart />
        <VolumeBar>
          <SelectBox>
            <select aria-label="指标" defaultValue="成交量">
              <option>成交量</option>
              <option>成交额</option>
            </select>
          </SelectBox>
          <span>114.5<Unit>万</Unit> 分时量: 5353 ↓ 现量: <Current>91</Current></span>
        </VolumeBar>
        <VolumeWrap>
          <VolumeChart />
          <ExpandButton aria-label="全屏"><ExpandIcon /></ExpandButton>
        </VolumeWrap>
        <Dates>
          {['11/04', '11/05', '11/06', '11/07', '11/10'].map((d) => (
            <span key={d}>{d}</span>
          ))}
        </Dates>
      </Charts>

      <PromoSection>
        <Promo>
          <MegaphoneIcon />
          <PromoText href="#promo">
            el-2<Unit>快到期了？</Unit><Unit>正好双</Unit><Num>11</Num>屯点福利券，即可兑换&gt;
          </PromoText>
          <Divider />
          <DismissButton aria-label="关闭"><CloseIcon /></DismissButton>
        </Promo>
      </PromoSection>

      <Tabs $kind="section">
        {sectionTabs.map((t) => (
          <Tab key={t} $active={t === '股吧'}>{t}</Tab>
        ))}
      </Tabs>

      <Cards>
        <Card>大年榜</Card>
        <Card>命中看盘</Card>
      </Cards>

      <Bottom>
        <BottomRow>
          <IndexLink href="#index">
            <CaretUp />
            <span>13417.87</span>
            <IndexLine>
              <IndexName>深证</IndexName>
              0.10%
            </IndexLine>
          </IndexLink>
          {actions.map((a) => (
            <Action key={a.label}>
              {a.icon}
              {a.label}
            </Action>
          ))}
        </BottomRow>
        <HomeIndicator />
      </Bottom>
    </Page>
  );
}
